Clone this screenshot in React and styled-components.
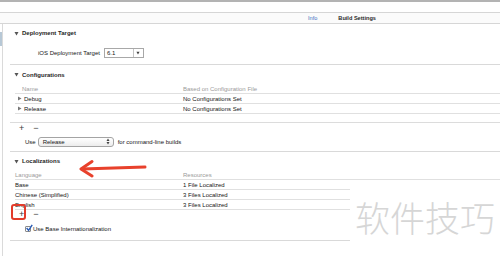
import React from "react";
import styled, { createGlobalStyle } from "styled-components";

const GlobalStyle = createGlobalStyle`
  html, body {
    margin: 0;
    padding: 0;
    background: #fff;
  }
  body {
    width: 500px;
    height: 256px;
    overflow: hidden;
    font-family: "Liberation Sans", Arial, sans-serif;
    font-size: 6px;
    color: #161616;
  }
`;

const Page = styled.div`
  position: relative;
  width: 500px;
  height: 256px;
  overflow: hidden;
`;

const TopStrip = styled.div`
  height: 2px;
  background: #b3b3b3;
`;

const HeaderGap = styled.div`
  height: 10px;
`;

const TabBar = styled.div`
  height: 10px;
  border-top: 1px solid #d6d6d6;
  border-bottom: 1px solid #d6d6d6;
  background: #fbfbfb;
  display: flex;
  align-items: center;
  padding-left: 308px;
  gap: 21px;
`;

const Tab = styled.div`
  font-size: 5.6px;
  font-weight: ${(p) => (p.$active ? "normal" : "bold")};
  color: ${(p) => (p.$active ? "#3c70c2" : "#2a2a2a")};
`;

const Body = styled.div`
  display: flex;
`;

const Rail = styled.div`
  width: 2px;
  min-height: 232px;
  border-right: 1px solid #dadada;
`;

const RailAccent = styled.div`
  height: 14px;
  margin-top: 8px;
  background: #b7c8d6;
`;

const Editor = styled.div`
  flex: 1;
  padding-left: 7px;
`;

const Section = styled.div`
  border-bottom: 1px solid #d9d9d9;
`;

const SectionHeader = styled.div`
  height: ${(p) => p.$h}px;
  display: flex;
  align-items: center;
  padding-left: 4px;
  gap: 3px;
  font-weight: bold;
  color: #262626;
`;

const FieldRow = styled.div`
  height: 22px;
  display: flex;
  align-items: center;
  padding-left: 28px;
  gap: 4px;
`;

const SelectBox = styled.div`
  width: 40px;
  height: 10px;
  box-sizing: border-box;
  border: 1px solid #a8a8a8;
  display: flex;
  background: #fff;
`;

const SelectValue = styled.div`
  flex: 1;
  padding-left: 2px;
  display: flex;
  align-items: center;
`;

const SelectArrow = styled.div`
  width: 9px;
  border-left: 1px solid #c4c4c4;
  display: flex;
  align-items: center;
  justify-content: center;
`;

const Table = styled.div`
  margin-left: 5px;
`;

const Row = styled.div`
  display: grid;
  grid-template-columns: 168px 1fr;
  height: 9px;
  align-items: center;
  border-bottom: 1px solid #e0e0e0;
  color: ${(p) => (p.$head ? "#9a9a9a" : "#161616")};
`;

const Cell = styled.div`
  display: flex;
  align-items: center;
  gap: 2px;
  padding-left: ${(p) => p.$pad || 0}px;
  white-space: nowrap;
`;

const Filler = styled.div`
  height: 8px;
  border-bottom: 1px solid #dcdcdc;
`;

const ButtonsBar = styled.div`
  height: ${(p) => p.$h}px;
  display: flex;
  align-items: center;
  padding-left: 9px;
  gap: 9px;
  font-size: 9px;
  color: #3a3a3a;
`;

const UseRow = styled.div`
  height: 19px;
  display: flex;
  align-items: center;
  padding-left: 15px;
`;

const PopUp = styled.div`
  width: 76px;
  height: 10px;
  box-sizing: border-box;
  margin: 0 4px 0 2px;
  border: 1px solid #a4a4a4;
  border-radius: 3px;
  background: linear-gradient(#ffffff, #ececec);
  display: flex;
  align-items: center;
  justify-content: space-between;
  padding: 0 3px 0 4px;
`;

const CheckRow = styled.div`
  height: 22px;
  display: flex;
  align-items: center;
  padding-left: 15px;
  gap: 2px;
`;

const CheckBox = styled.div`
  width: 6px;
  height: 6px;
  box-sizing: border-box;
  border: 1px solid #8a8a8a;
  border-radius: 1px;
  background: #fff;
  position: relative;
`;

const CheckMark = styled.svg`
  position: absolute;
  left: -1px;
  top: -3px;
`;

const Arrow = styled.svg`
  position: absolute;
  left: 76px;
  top: 158px;
`;

const Highlight = styled.div`
  position: absolute;
  left: 11px;
  top: 204px;
  width: 15px;
  height: 16px;
  box-sizing: border-box;
  border: 2.5px solid #e23b2b;
  border-radius: 3px;
`;

const Watermark = styled.div`
  position: absolute;
  left: 350px;
  top: 183px;
  width: 150px;
  height: 66px;
  background: #fff;
  display: flex;
  align-items: center;
  justify-content: center;
  font-family: "Noto Sans CJK SC", sans-serif;
  font-weight: 300;
  font-size: 35px;
  color: #d6d6d6;
`;

const Down = ({ size = 5, color = "#555" }) => (
  <svg width={size} height={size} viewBox="0 0 10 10">
    <polygon points="1,2 9,2 5,9" fill={color} />
  </svg>
);

const Right = () => (
  <svg width="5" height="5" viewBox="0 0 10 10">
    <polygon points="2,1 9,5 2,9" fill="#777" />
  </svg>
);

const UpDown = () => (
  <svg width="4" height="7" viewBox="0 0 8 14">
    <polygon points="1,6 7,6 4,1" fill="#444" />
    <polygon points="1,8 7,8 4,13" fill="#444" />
  </svg>
);

export default function App() {
  return (
    <Page>
      <GlobalStyle />
      <TopStrip />
      <HeaderGap />
      <TabBar>
        <Tab $active>Info</Tab>
        <Tab>Build Settings</Tab>
      </TabBar>
      <Body>
        <Rail>
          <RailAccent />
        </Rail>
        <Editor>
          <Section>
            <SectionHeader $h={18}>
              <Down />
              Deployment Target
            </SectionHeader>
            <FieldRow>
              <span>iOS Deployment Target</span>
              <SelectBox>
                <SelectValue>6.1</SelectValue>
                <SelectArrow>
                  <Down size={4} color="#444" />
                </SelectArrow>
              </SelectBox>
            </FieldRow>
          </Section>

          <Section>
            <SectionHeader $h={19}>
              <Down />
              Configurations
            </SectionHeader>
            <Table>
              <Row $head>
                <Cell $pad={7}>Name</Cell>
                <Cell>Based on Configuration File</Cell>
              </Row>
              <Row>
                <Cell $pad={2}>
                  <Right />
                  Debug
                </Cell>
                <Cell>No Configurations Set</Cell>
              </Row>
              <Row>
                <Cell $pad={2}>
                  <Right />
                  Release
                </Cell>
                <Cell>No Configurations Set</Cell>
              </Row>
            </Table>
            <Filler />
            <ButtonsBar $h={9}>
              <span>+</span>
              <span>−</span>
            </ButtonsBar>
            <UseRow>
              <span>Use</span>
              <PopUp>
                <span>Release</span>
                <UpDown />
              </PopUp>
              <span>for command-line builds</span>
            </UseRow>
          </Section>

          <Section>
            <SectionHeader $h={18}>
              <Down />
              Localizations
            </SectionHeader>
            <Table>
              <Row $head>
                <Cell>Language</Cell>
                <Cell>Resources</Cell>
              </Row>
              <Row>
                <Cell>Base</Cell>
                <Cell>1 File Localized</Cell>
              </Row>
              <Row>
                <Cell>Chinese (Simplified)</Cell>
                <Cell>3 Files Localized</Cell>
              </Row>
              <Row>
                <Cell>English</Cell>
                <Cell>3 Files Localized</Cell>
              </Row>
            </Table>
            <ButtonsBar $h={8}>
              <span>+</span>
              <span>−</span>
            </ButtonsBar>
            <CheckRow>
              <CheckBox>
                <CheckMark width="8" height="8" viewBox="0 0 10 10">
                  <polyline
                    points="2,5 4.5,8 9,1"
                    fill="none"
                    stroke="#2b5db5"
                    strokeWidth="1.8"
                  />
                </CheckMark>
              </CheckBox>
              <span>Use Base Internationalization</span>
            </CheckRow>
          </Section>
        </Editor>
      </Body>

      <Arrow width="72" height="20" viewBox="0 0 72 20">
        <line x1="69" y1="9" x2="6" y2="11" stroke="#e8412c" strokeWidth="3" strokeLinecap="round" />
        <polyline
          points="16,3.5 5,11 16,18"
          fill="none"
          stroke="#e8412c"
          strokeWidth="3"
          strokeLinecap="round"
          strokeLinejoin="round"
        />
      </Arrow>
      <Highlight />
      <Watermark>软件技巧</Watermark>
    </Page>
  );
}
